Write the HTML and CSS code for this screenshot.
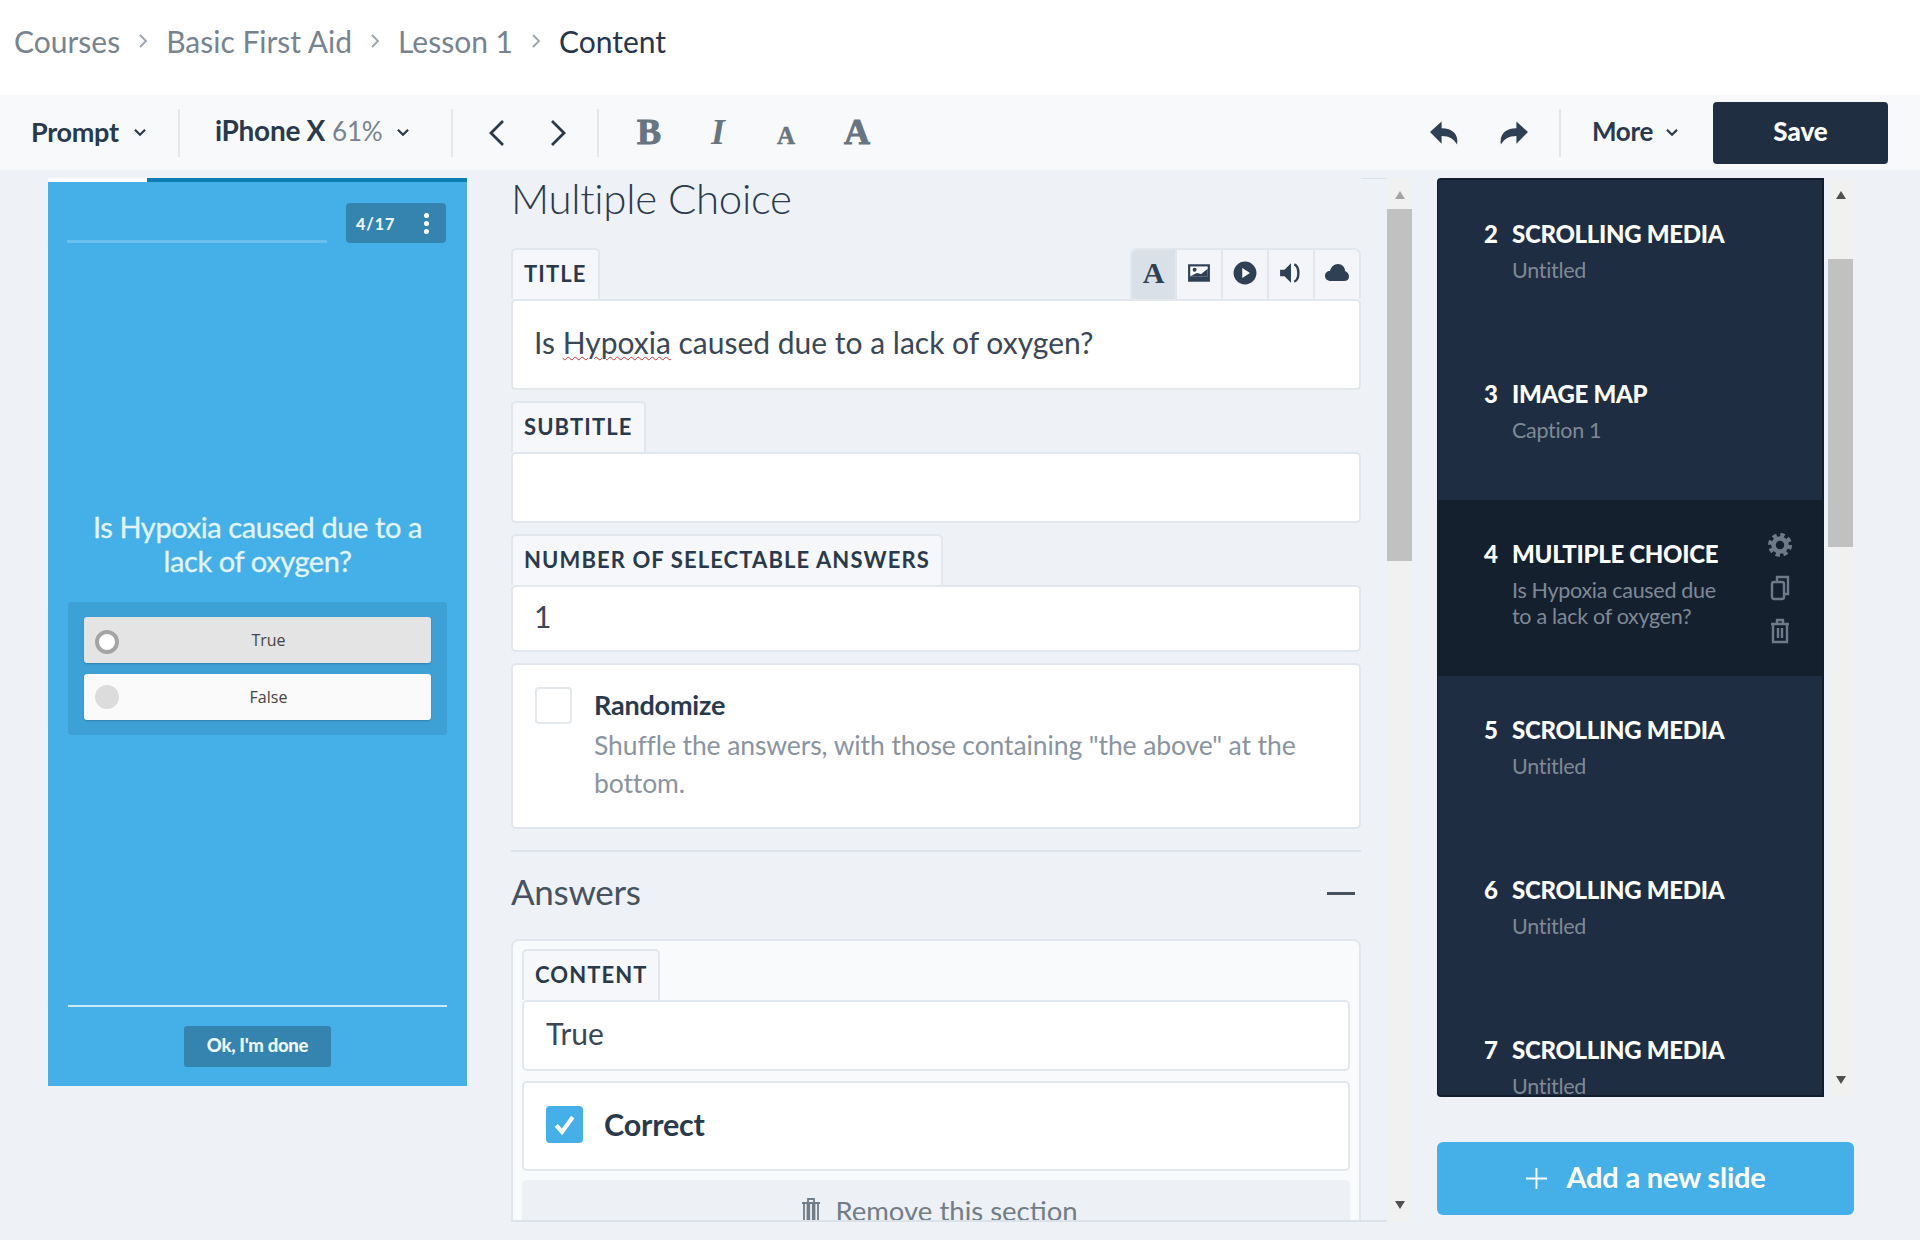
FILE: index.html
```html
<!DOCTYPE html>
<html lang="en">
<head>
<meta charset="utf-8">
<title>Content</title>
<link rel="stylesheet" href="styles.css">
</head>
<body>
<nav class="crumbs">
  <a class="crumb">Courses</a><svg class="crumb-sep" viewBox="0 0 10 16"><path d="M2 2l6 6-6 6"/></svg>
  <a class="crumb">Basic First Aid</a><svg class="crumb-sep" viewBox="0 0 10 16"><path d="M2 2l6 6-6 6"/></svg>
  <a class="crumb">Lesson 1</a><svg class="crumb-sep" viewBox="0 0 10 16"><path d="M2 2l6 6-6 6"/></svg>
  <span class="crumb current">Content</span>
</nav>
<header class="toolbar">
  <div class="tool-group prompt"><span class="tool-label">Prompt</span><svg class="caret" viewBox="0 0 12 8"><path d="M1.5 1.5L6 6l4.500-4.500"/></svg></div>
  <div class="tool-group device"><span class="tool-label">iPhone X</span><span class="zoom-val">61%</span><svg class="caret" viewBox="0 0 12 8"><path d="M1.500 1.500L6 6l4.500-4.500"/></svg></div>
  <div class="tool-group nav-arrows">
    <svg class="nav-ico" viewBox="0 0 20 30"><path d="M16 3L4 15l12 12"/></svg>
    <svg class="nav-ico" viewBox="0 0 20 30"><path d="M4 3l12 12L4 27"/></svg>
  </div>
  <div class="tool-group format">
    <span class="fmt fmt-b">B</span><span class="fmt fmt-i">I</span><span class="fmt fmt-sm">A</span><span class="fmt fmt-lg">A</span>
  </div>
  <div class="tool-spacer"></div>
  <div class="tool-group history">
    <svg class="hist-ico" viewBox="0 0 30 24"><path d="M0 11L12 0v7c11 0 18 6 16 17-3-6-8-9-16-9v8z"/></svg>
    <svg class="hist-ico" viewBox="0 0 30 24"><path d="M30 11L18 0v7C7 7 0 13 2 24c3-6 8-9 16-9v8z"/></svg>
  </div>
  <div class="tool-group more"><span class="tool-label">More</span><svg class="caret" viewBox="0 0 12 8"><path d="M1.500 1.500L6 6l4.500-4.500"/></svg></div>
  <button class="save">Save</button>
</header>
<main class="workspace">
  <section class="phone">
    <div class="phone-progress"><div class="phone-progress-done"></div></div>
    <div class="phone-top">
      <div class="phone-line"></div>
      <div class="phone-badge"><span>4/17</span><i class="dots"><b></b><b></b><b></b></i></div>
    </div>
    <div class="phone-body">
      <h2 class="phone-q">Is Hypoxia caused due to a lack of oxygen?</h2>
      <div class="phone-answers">
        <div class="phone-answer selected"><span class="phone-radio"></span><span class="phone-answer-text">True</span></div>
        <div class="phone-answer"><span class="phone-radio"></span><span class="phone-answer-text">False</span></div>
      </div>
    </div>
    <div class="phone-foot"><button class="phone-done">Ok, I'm done</button></div>
  </section>

  <section class="editor">
    <div class="editor-scroll">
      <div class="editor-content">
        <h1 class="editor-title">Multiple Choice</h1>
        <div class="field field-title">
          <div class="tab-row">
            <span class="tab">TITLE</span>
            <div class="media-tabs">
              <span class="media-tab active"><span class="media-a">A</span></span>
              <span class="media-tab"><svg class="media-ico" viewBox="0 0 22 20"><rect x="1" y="2" width="20" height="16" fill="#2f3f54"/><rect x="3" y="4" width="16" height="9" fill="#fff"/><circle cx="7" cy="7" r="1.800" fill="#2f3f54"/><path d="M3 13l6-3 4 1 6-5v7z" fill="#2f3f54"/></svg></span>
              <span class="media-tab"><svg class="media-ico" viewBox="0 0 22 22"><circle cx="11" cy="11" r="10.500" fill="#2f3f54"/><path d="M8.500 6.500l7 4.500-7 4.500z" fill="#fff"/></svg></span>
              <span class="media-tab"><svg class="media-ico" viewBox="0 0 22 22"><path d="M1 8h4l6-6v18l-6-6H1z" fill="#2f3f54"/><path d="M14 3c5 2 5 14 0 16" fill="none" stroke="#2f3f54" stroke-width="2.200"/></svg></span>
              <span class="media-tab"><svg class="media-ico" viewBox="0 0 24 20"><path d="M6 18C2 18 0 15.500 0 13c0-3 2-5 5-5 1-4 4-7 8-7 4 0 7 3 7 7 2.500 1 4 3 4 5.500 0 3-2 4.500-5 4.500z" fill="#2f3f54"/></svg></span>
            </div>
          </div>
          <div class="input input-title"><span>Is <span class="misspelt">Hypoxia</span> caused due to a lack of oxygen?</span></div>
        </div>
        <div class="field">
          <div class="tab-row"><span class="tab">SUBTITLE</span></div>
          <div class="input input-sub"></div>
        </div>
        <div class="field">
          <div class="tab-row"><span class="tab">NUMBER OF SELECTABLE ANSWERS</span></div>
          <div class="input input-num">1</div>
        </div>
        <div class="card randomize">
          <span class="check"></span>
          <div class="randomize-text">
            <div class="check-label">Randomize</div>
            <p class="check-desc">Shuffle the answers, with those containing "the above" at the bottom.</p>
          </div>
        </div>
        <hr class="divider">
        <div class="answers-head"><h2 class="answers-title">Answers</h2><span class="minus"></span></div>
        <div class="answer-card">
          <div class="tab-row"><span class="tab tab-content">CONTENT</span></div>
          <div class="input input-true">True</div>
          <div class="card correct">
            <span class="check checked"><svg viewBox="0 0 20 20"><path d="M5 10.500l3.500 4L15 5.500"/></svg></span>
            <span class="check-label">Correct</span>
          </div>
          <div class="remove">
            <svg class="remove-ico" viewBox="0 0 22 26"><path d="M2 7h18M8 7V3h6v4M4 7v18h3.500V7M9.200 7v18h3.600V7M14.500 7v18H18V7"/></svg>
            <span>Remove this section</span>
          </div>
        </div>
      </div>
    </div>
    <div class="scrollbar">
      <svg class="sb-arrow muted" viewBox="0 0 10 8"><path d="M5 0l5 8H0z"/></svg>
      <div class="sb-thumb thumb-editor"></div>
      <div class="sb-fill"></div>
      <svg class="sb-arrow" viewBox="0 0 10 8"><path d="M5 8L0 0h10z"/></svg>
    </div>
  </section>

  <aside class="slides-col">
    <div class="slides-wrap">
      <ol class="slides">
        <li class="slide"><span class="slide-num">2</span><div class="slide-main"><div class="slide-title">SCROLLING MEDIA</div><div class="slide-sub">Untitled</div></div></li>
        <li class="slide"><span class="slide-num">3</span><div class="slide-main"><div class="slide-title">IMAGE MAP</div><div class="slide-sub">Caption 1</div></div></li>
        <li class="slide active">
          <span class="slide-num">4</span>
          <div class="slide-main"><div class="slide-title">MULTIPLE CHOICE</div><div class="slide-sub">Is Hypoxia caused due to a lack of oxygen?</div></div>
          <div class="slide-tools">
            <svg viewBox="0 0 26 26"><circle cx="13" cy="13" r="6.500" fill="none" stroke="#6f7a88" stroke-width="4.500"/><circle cx="13" cy="13" r="10" fill="none" stroke="#6f7a88" stroke-width="4" stroke-dasharray="4.300 3.550"/></svg>
            <svg viewBox="0 0 26 26"><rect x="5" y="7" width="12" height="17" rx="2" fill="none" stroke="#6f7a88" stroke-width="2.400"/><path d="M10 6V2h11v17h-3" fill="none" stroke="#6f7a88" stroke-width="2.400"/></svg>
            <svg viewBox="0 0 26 26"><path d="M4 6h18M10 6V2h6v4M6 6v18h14V6M11 10v10M15 10v10" fill="none" stroke="#6f7a88" stroke-width="2.400"/></svg>
          </div>
        </li>
        <li class="slide"><span class="slide-num">5</span><div class="slide-main"><div class="slide-title">SCROLLING MEDIA</div><div class="slide-sub">Untitled</div></div></li>
        <li class="slide"><span class="slide-num">6</span><div class="slide-main"><div class="slide-title">SCROLLING MEDIA</div><div class="slide-sub">Untitled</div></div></li>
        <li class="slide"><span class="slide-num">7</span><div class="slide-main"><div class="slide-title">SCROLLING MEDIA</div><div class="slide-sub">Untitled</div></div></li>
      </ol>
      <div class="scrollbar scrollbar-slides">
        <svg class="sb-arrow" viewBox="0 0 10 8"><path d="M5 0l5 8H0z"/></svg>
        <div class="sb-thumb thumb-slides"></div>
        <div class="sb-fill"></div>
        <svg class="sb-arrow" viewBox="0 0 10 8"><path d="M5 8L0 0h10z"/></svg>
      </div>
    </div>
    <button class="add-slide"><svg class="plus" viewBox="0 0 24 24"><path d="M12 1v22M1 12h22"/></svg>Add a new slide</button>
  </aside>
</main>
</body>
</html>
```
FILE: styles.css
```css
* { box-sizing: border-box; }
html, body { margin: 0; padding: 0; }
body {
  width: 1920px;
  height: 1243px;
  overflow: hidden;
  background: #fff;
  font-family: "Lato", "Noto Sans", sans-serif;
  color: #26364a;
}
h1, h2, p, ol { margin: 0; padding: 0; }
button { font-family: inherit; border: 0; cursor: pointer; }

/* breadcrumb */
.crumbs {
  height: 95px;
  padding: 0 0 14px 14px;
  display: flex;
  align-items: center;
  background: #fff;
}
.crumb { font-size: 30px; color: #77848f; }
.crumb.current { color: #27364a; }
.crumb-sep { width: 10px; height: 16px; margin: 0 18px 0 18px; fill: none; stroke: #9aa4ae; stroke-width: 1.800; }

/* toolbar */
.toolbar {
  height: 75px;
  display: flex;
  align-items: center;
  background: #f8f9fb;
  padding-right: 32px;
}
.tool-group {
  height: 48px;
  display: flex;
  align-items: center;
  border-right: 2px solid #e4e8ed;
}
.tool-label { font-size: 27px; font-weight: 700; color: #2a3a4d; letter-spacing: -0.3px; margin-top: -3px; }
.caret { width: 14px; height: 9px; fill: none; stroke: #2a3a4d; stroke-width: 2; margin-left: 14px; }
.prompt { width: 180px; padding-left: 31px; }
.device { width: 273px; padding-left: 35px; }
.device .tool-label { font-size: 28px; margin-top: -6px; }
.zoom-val { font-size: 26px; color: #78838f; margin: -4px 0 0 7px; letter-spacing: -0.2px; }
.device .caret { margin-left: 14px; }
.nav-arrows { width: 146px; padding-left: 34px; gap: 41px; }
.nav-ico { width: 20px; height: 30px; fill: none; stroke: #2a3a4d; stroke-width: 2.800; }
.format { border-right: 0; padding-left: 36px; font-family: "Liberation Serif", serif; color: #68747f; margin-top: -2px; }
.fmt { display: block; line-height: 1; font-weight: 700; text-align: center; }
.fmt-b { font-size: 36px; width: 28px; margin-right: 41px; -webkit-text-stroke: 1px #68747f; }
.fmt-i { font-size: 36px; width: 28px; margin-right: 42px; font-style: italic; }
.fmt-sm { font-size: 25px; width: 24px; margin: 8px 44px 0 0; -webkit-text-stroke: .5px #68747f; }
.fmt-lg { font-size: 36px; width: 30px; -webkit-text-stroke: 1px #68747f; }
.tool-spacer { flex: 1; }
.history { width: 135px; gap: 40px; padding-left: 4px; }
.hist-ico { width: 29px; height: 24px; fill: #2f3f54; }
.more { width: 152px; padding-left: 31px; border: 0; }
.more .tool-label { font-size: 26px; }
.more .caret { margin-left: 12px; }
.save {
  width: 175px;
  height: 62px;
  background: #202e42;
  border-radius: 4px;
  color: #fff;
  font-size: 26px;
  font-weight: 900;
  padding: 0 0 4px;
}

/* workspace */
.workspace {
  height: 1070px;
  background: #eef1f6;
  display: flex;
  align-items: flex-start;
  padding: 8px 0 0 48px;
}

/* phone preview */
.phone {
  width: 419px;
  height: 908px;
  background: #45b0e8;
  display: flex;
  flex-direction: column;
}
.phone-progress { height: 4px; background: #0b7db3; }
.phone-progress-done { width: 99px; height: 4px; background: #fff; }
.phone-top { display: flex; align-items: flex-end; padding: 21px 21px 0 19px; gap: 19px; }
.phone-line { width: 260px; height: 3px; background: #6ac0ec; }
.phone-badge {
  width: 100px;
  height: 40px;
  background: #3584b0;
  border-radius: 4px;
  color: #e8f4fa;
  font-size: 16px;
  font-weight: 900;
  letter-spacing: 1px;
  display: flex;
  align-items: center;
  justify-content: space-between;
  padding: 0 17px 0 10px;
}
.dots { display: flex; flex-direction: column; gap: 3px; }
.dots b { display: block; width: 5px; height: 5px; border-radius: 50%; background: #fff; }
.phone-body { flex: 1; padding: 267px 20px 0 20px; }
.phone-q {
  color: #e2f4fd;
  font-size: 29px;
  font-weight: 400;
  line-height: 34px;
  text-align: center;
  letter-spacing: -0.4px;
  -webkit-text-stroke: .3px #e2f4fd;
  padding: 0 15px;
}
.phone-answers {
  margin-top: 24px;
  background: #3ea1d6;
  border-radius: 3px;
  padding: 15px 16px;
  display: flex;
  flex-direction: column;
  gap: 11px;
  height: 133px;
}
.phone-answer {
  height: 46px;
  background: #fafafa;
  border-radius: 3px;
  box-shadow: 0 1px 2px rgba(0,0,0,.2);
  display: flex;
  align-items: center;
  padding-left: 11px;
  font-family: "Open Sans", sans-serif;
  font-size: 16px;
  color: #444;
}
.phone-answer.selected { background: #e4e4e4; }
.phone-radio { width: 24px; height: 24px; border-radius: 50%; background: #dcdcdc; }
.selected .phone-radio { background: #fff; border: 4px solid #a4a4a4; margin-top: 3px; }
.phone-answer-text { flex: 1; text-align: center; padding-right: 13px; }
.phone-foot {
  margin: 0 20px;
  height: 81px;
  border-top: 2px solid #cbe9f9;
  display: flex;
  justify-content: center;
  padding-top: 19px;
}
.phone-done {
  width: 147px;
  height: 41px;
  background: #3584b0;
  border-radius: 3px;
  color: #eef8fd;
  font-size: 18.500px;
  font-weight: 900;
  letter-spacing: -0.3px;
  padding: 0 0 3px;
}

/* editor */
.editor {
  width: 901px;
  height: 1044px;
  margin-left: 44px;
  display: flex;
  align-items: flex-start;
}
.editor-scroll {
  width: 876px;
  height: 1050px;
  margin-top: -6px;
  overflow: hidden;
  border-bottom: 2px solid #dbe2e9;
  padding: 5px 26px 0 0;
  background: linear-gradient(#dbe2e9, #dbe2e9) no-repeat right 0 top 6px / 26px 1px;
}
.editor-title {
  font-size: 42px;
  font-weight: 300;
  line-height: 42px;
  height: 70px;
  color: #2a3a4d;
  letter-spacing: -0.3px;
}
.field { margin-bottom: 11px; }
.field-title { margin-top: 1px; }
.tab-row { display: flex; justify-content: space-between; align-items: flex-end; height: 51px; }
.tab {
  height: 51px;
  padding: 10px 11px 0;
  border: 2px solid #e1e7ed;
  border-bottom: 0;
  border-radius: 5px 5px 0 0;
  font-size: 22px;
  font-weight: 700;
  letter-spacing: 1.100px;
  color: #2a3a4d;
  background: #f5f7fa;
}
.media-tabs { display: flex; height: 51px; border: 2px solid #e1e7ed; border-bottom: 0; border-radius: 7px 7px 0 0; overflow: hidden; background: #f3f5f9; }
.media-tab {
  width: 46px;
  display: flex;
  align-items: center;
  justify-content: center;
  border-left: 2px solid #e1e7ed;
  padding-bottom: 3px;
}
.media-tab:first-child { border-left: 0; width: 43px; }
.media-tab.active { background: #d9e0e8; }
.media-a { font-family: "Liberation Serif", serif; font-weight: 700; font-size: 30px; color: #2f3f54; }
.media-ico { width: 24px; height: 24px; }
.input {
  background: #fff;
  border: 2px solid #e1e7ed;
  border-radius: 5px;
  padding: 0 21px 5px;
  display: flex;
  align-items: center;
  font-size: 30px;
  color: #3a4756;
  white-space: pre;
}
.input-title { height: 91px; }
.misspelt { text-decoration: underline wavy #d8332e 1px; text-underline-offset: 2px; }
.input-sub { height: 71px; }
.input-num { height: 67px; }
.card {
  background: #fff;
  border: 2px solid #e1e7ed;
  border-radius: 5px;
}
.check {
  flex: none;
  width: 37px;
  height: 37px;
  border: 2px solid #e4e9ee;
  border-radius: 4px;
  background: #fff;
  display: block;
}
.check.checked { background: #45b0e8; border-color: #45b0e8; }
.check svg { display: block; width: 100%; height: 100%; fill: none; stroke: #fff; stroke-width: 2.500; }
.randomize { height: 166px; display: flex; gap: 22px; padding: 22px 22px 0 22px; }
.check-label { font-size: 30.500px; font-weight: 700; color: #2a3a4d; letter-spacing: -0.2px; line-height: 36px; }
.randomize .check-label { font-size: 27px; margin-top: 0; }
.check-desc { font-size: 26.500px; line-height: 38px; color: #8a949f; margin-top: 3px; letter-spacing: -0.1px; }
.divider { border: 0; height: 2px; background: #dde3ea; margin: 21px 0 0; }
.answers-head { height: 87px; display: flex; align-items: center; justify-content: space-between; padding: 0 6px 10px 0; }
.answers-title { font-size: 35px; font-weight: 400; color: #46535f; letter-spacing: -0.3px; }
.minus { width: 28px; height: 3px; background: #46535f; margin-top: 6px; }
.answer-card {
  background: #f8fafc;
  border: 2px solid #e1e7ed;
  border-radius: 8px;
  padding: 8px 9px 0;
  height: 300px;
}
.tab-content { padding: 10px 10px 0 11px; }
.input-true { height: 71px; padding: 0 22px 5px; margin-bottom: 10px; }
.correct { height: 90px; display: flex; align-items: center; gap: 21px; padding: 0 22px 4px; }
.remove {
  margin-top: 9px;
  height: 70px;
  background: #edf0f4;
  border-radius: 5px;
  display: flex;
  justify-content: center;
  padding: 14px 0 0 6px;
  gap: 13px;
  font-size: 27.500px;
  color: #717d89;
}
.remove-ico { width: 22px; height: 26px; margin-top: 2px; fill: none; stroke: #717d89; stroke-width: 1.800; }

/* scrollbars */
.scrollbar {
  width: 25px;
  height: 100%;
  background: #f1f1f1;
  display: flex;
  flex-direction: column;
  align-items: center;
}
.sb-arrow { flex: none; width: 10px; height: 8px; margin: 13px 0; fill: #505050; }
.sb-arrow.muted { fill: #a3a3a3; }
.sb-thumb { flex: none; width: 100%; background: #c1c1c1; }
.thumb-editor { height: 352px; margin-top: -3px; }
.thumb-slides { height: 288px; margin-top: 47px; }
.sb-fill { flex: 1; }

/* slides */
.slides-col { width: 417px; margin-left: 25px; }
.slides-wrap { display: flex; height: 919px; gap: 4px; }
.slides {
  width: 387px;
  height: 919px;
  overflow: hidden;
  list-style: none;
  background: #1e2d42;
  border: 1px solid #131d2e;
  border-width: 2px 2px 2px 1px;
  border-radius: 4px 0 0 4px;
}
.scrollbar-slides { width: 25px; }
.slide {
  height: 160px;
  padding: 40px 0 0 46px;
  display: flex;
}
.slide.active { height: 176px; background: #15202f; padding-top: 40px; }
.slide-num { width: 28px; flex: none; font-size: 24px; font-weight: 900; color: #fff; line-height: 28px; }
.slide-main { width: 220px; }
.slide-title { font-size: 24px; font-weight: 900; color: #fff; line-height: 28px; letter-spacing: -0.3px; white-space: nowrap; }
.slide-sub { font-size: 21.500px; color: #7f8996; line-height: 26px; margin-top: 9px; letter-spacing: -0.3px; }
.slide-tools { display: flex; flex-direction: column; gap: 17px; margin: -8px 0 0 35px; }
.slide-tools svg { display: block; width: 26px; height: 26px; }
.add-slide {
  margin-top: 45px;
  width: 417px;
  height: 73px;
  background: #45b0e8;
  border-radius: 6px;
  color: #fff;
  font-size: 29px;
  font-weight: 700;
  display: flex;
  align-items: center;
  justify-content: center;
  gap: 18px;
  padding: 0 0 4px;
  letter-spacing: -0.2px;
}
.plus { width: 23px; height: 23px; fill: none; stroke: #fff; stroke-width: 2; margin-top: 4px; }
```
